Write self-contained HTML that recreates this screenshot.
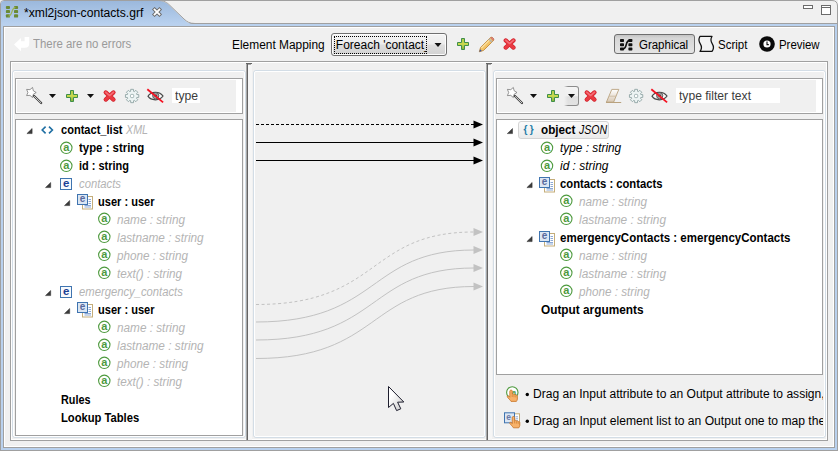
<!DOCTYPE html>
<html><head><meta charset="utf-8"><title>xml2json-contacts.grf</title>
<style>
html,body{margin:0;padding:0;background:#f0f0f0;}
body{width:838px;height:451px;overflow:hidden;position:relative;font-family:"Liberation Sans",sans-serif;}
#root{position:absolute;left:0;top:0;width:838px;height:451px;overflow:hidden;background:#f0f0f0;}
.t{position:absolute;white-space:nowrap;line-height:14px;font-family:"Liberation Sans",sans-serif;transform-origin:0 0;}
.b{position:absolute;box-sizing:border-box;}
.grp{position:absolute;box-sizing:border-box;border:1px solid #d3dde6;border-radius:3px;}
.grp:after{content:"";position:absolute;left:0;top:0;right:0;bottom:0;border:1px solid #fff;border-radius:2px;}
.bx{position:absolute;box-sizing:border-box;border:1px solid #a0a0a0;background:#fff;}
svg{position:absolute;left:0;top:0;overflow:visible;}
.sb{font-family:"Liberation Sans",sans-serif;font-weight:bold;}
</style></head><body><div id="root">

<div class="b" style="left:0px;top:23px;width:838px;height:428px;background:#b9d1ee;border:1px solid #a0a0a0;"></div>
<div class="b" style="left:3px;top:26px;width:832px;height:422px;background:#f0f0f0;border:1px solid #a0a0a0;"></div>
<div class="b" style="left:4px;top:27px;width:830px;height:420px;border:1px solid #fff;"></div>
<div class="b" style="left:10px;top:61px;width:818px;height:380px;border:1px solid #a0a0a0;"></div>
<div class="b" style="left:11px;top:62px;width:816px;height:378px;border:1px solid #fff;"></div>
<div class="grp" style="left:12px;top:70px;width:234px;height:368px;"></div>
<div class="grp" style="left:253px;top:70px;width:233px;height:368px;"></div>
<div class="grp" style="left:493px;top:70px;width:333px;height:368px;"></div>
<div class="b" style="left:246px;top:63px;width:1px;height:377px;background:#a8a8a8;"></div>
<div class="b" style="left:247px;top:63px;width:1px;height:377px;background:#646464;"></div>
<div class="b" style="left:248px;top:64px;width:4px;height:376px;background:#f6f6f6;"></div>
<div class="b" style="left:246px;top:63px;width:6px;height:1px;background:#646464;"></div>
<div class="b" style="left:248px;top:64px;width:3px;height:1px;background:#a8a8a8;"></div>
<div class="b" style="left:486px;top:63px;width:1px;height:377px;background:#a8a8a8;"></div>
<div class="b" style="left:487px;top:63px;width:1px;height:377px;background:#646464;"></div>
<div class="b" style="left:488px;top:64px;width:4px;height:376px;background:#f6f6f6;"></div>
<div class="b" style="left:486px;top:63px;width:6px;height:1px;background:#646464;"></div>
<div class="b" style="left:488px;top:64px;width:3px;height:1px;background:#a8a8a8;"></div>
<div class="bx" style="left:15px;top:78px;width:228px;height:36px;"></div>
<div class="b" style="left:17px;top:80px;width:219px;height:32px;background:#f0f0f0;"></div>
<div class="b" style="left:172px;top:88px;width:28px;height:15px;background:#fff;"></div>
<div class="bx" style="left:15px;top:119px;width:228px;height:317px;"></div>
<div class="bx" style="left:496px;top:78px;width:327px;height:36px;"></div>
<div class="b" style="left:498px;top:80px;width:318px;height:32px;background:#f0f0f0;"></div>
<div class="b" style="left:676px;top:88px;width:104px;height:15px;background:#fff;"></div>
<div class="bx" style="left:496px;top:119px;width:327px;height:256px;"></div>
<div class="b" style="left:518px;top:121px;width:91px;height:18px;border:1px solid #d4d4d4;border-radius:3px;background:linear-gradient(#fafafa,#ebebeb);"></div>
<div class="b" style="left:331px;top:33px;width:116px;height:23px;border:1px solid #707070;border-radius:3px;background:linear-gradient(#f4f4f4 0%,#ececec 48%,#dedede 52%,#d2d2d2 100%);box-shadow:inset 0 0 0 1px #fcfcfc;"></div>
<div class="b" style="left:334px;top:36px;width:93px;height:18px;border:1px dotted #000;"></div>
<div class="b" style="left:614px;top:34px;width:81px;height:20px;border:1px solid #6e6e6e;border-radius:3px;background:linear-gradient(#c4c4c4 0%,#d6d6d6 18%,#dedede 60%,#e4e4e4 100%);"></div>
<div class="b" style="left:564px;top:86px;width:15px;height:20px;border:1px solid #8c8c8c;border-left:none;border-radius:0 3px 3px 0;background:linear-gradient(#f5f5f5 0%,#efefef 50%,#dfdfdf 54%,#e3e3e3 100%);"></div>
<div class="b" style="left:564px;top:86px;width:4px;height:20px;background:linear-gradient(90deg,#f0f0f0,rgba(240,240,240,0));"></div>
<svg width="838" height="451" viewBox="0 0 838 451">
<defs>
<linearGradient id="tabg" x1="0" y1="0" x2="0" y2="1"><stop offset="0" stop-color="#9bb8dc"/><stop offset="1" stop-color="#bbd3f0"/></linearGradient>
<linearGradient id="plusg" x1="0" y1="0" x2="0" y2="1"><stop offset="0" stop-color="#a9c94a"/><stop offset="0.5" stop-color="#cbdb4f"/><stop offset="1" stop-color="#7fae3c"/></linearGradient>
<radialGradient id="xg" cx="0.5" cy="0.4" r="0.6"><stop offset="0" stop-color="#f47a7a"/><stop offset="1" stop-color="#dc2a32"/></radialGradient>
<linearGradient id="curg" x1="0" y1="0" x2="1" y2="1"><stop offset="0.3" stop-color="#fff"/><stop offset="1" stop-color="#c8c8c8"/></linearGradient>
<linearGradient id="erg" x1="0" y1="0" x2="0" y2="1"><stop offset="0" stop-color="#ffffff"/><stop offset="1" stop-color="#d8c8b4"/></linearGradient>

<g id="wand">
 <path d="M8.2 8.8 L15.6 16" stroke="#3a3a3a" stroke-width="2.2" stroke-linecap="round" fill="none"/>
 <path d="M8.8 9.4 L15.3 15.7" stroke="#fff" stroke-width="0.8" stroke-linecap="round" fill="none"/>
 <path d="M6.94 0.46 L7.73 3.74 L10.60 5.50 L7.73 7.26 L6.94 10.54 L4.37 8.35 L1.01 8.62 L2.30 5.50 L1.01 2.38 L4.37 2.65 Z" fill="#fff" stroke="#6a6a6a" stroke-width="0.7" stroke-linejoin="round"/>
</g>
<g id="dd"><path d="M0 0 L7 0 L3.5 4 Z" fill="#111"/></g>
<g id="plus">
 <path d="M4.5 0.5 L7.5 0.5 L7.5 4.5 L11.5 4.5 L11.5 7.5 L7.5 7.5 L7.5 11.5 L4.5 11.5 L4.5 7.5 L0.5 7.5 L0.5 4.5 L4.5 4.5 Z" fill="url(#plusg)" stroke="#3f8f4a" stroke-width="1" stroke-linejoin="miter"/>
</g>
<g id="redx">
 <path d="M2.5 2.4 L10.3 9.6 M10.3 2.4 L2.5 9.6" stroke="#cf222c" stroke-width="4.2" stroke-linecap="round" fill="none"/>
 <path d="M2.5 2.4 L10.3 9.6 M10.3 2.4 L2.5 9.6" stroke="#ea3a42" stroke-width="3" stroke-linecap="round" fill="none"/>
 <path d="M2.6 2.3 L6.4 5.6 L10.2 2.3" stroke="#f47078" stroke-width="1.4" stroke-linecap="round" stroke-linejoin="round" fill="none"/>
</g>
<g id="gear">
 <path d="M5.52 2.33 L5.62 0.34 L8.38 0.34 L8.48 2.33 L9.26 2.65 L10.73 1.32 L12.68 3.27 L11.35 4.74 L11.67 5.52 L13.66 5.62 L13.66 8.38 L11.67 8.48 L11.35 9.26 L12.68 10.73 L10.73 12.68 L9.26 11.35 L8.48 11.67 L8.38 13.66 L5.62 13.66 L5.52 11.67 L4.74 11.35 L3.27 12.68 L1.32 10.73 L2.65 9.26 L2.33 8.48 L0.34 8.38 L0.34 5.62 L2.33 5.52 L2.65 4.74 L1.32 3.27 L3.27 1.32 L4.74 2.65 Z" fill="#edf4f4" stroke="#8fa4a4" stroke-width="0.9" stroke-linejoin="round"/>
 <rect x="5.4" y="5.4" width="3.2" height="3.2" rx="1" fill="#fff" stroke="#93a8a8" stroke-width="0.9"/>
</g>
<g id="eye">
 <path d="M0.7 7.4 C3.4 2.4 12.2 2 15.7 7.2 C12.4 12.2 3.8 12.2 0.7 7.4 Z" fill="#fafafa" stroke="#484848" stroke-width="1.25"/>
 <circle cx="8.4" cy="6.9" r="3.1" fill="#a8a8a8" stroke="#555" stroke-width="0.9"/>
 <circle cx="8.4" cy="6.9" r="1.3" fill="#383838"/>
 <path d="M0 0.4 L15.8 13.6" stroke="#f41222" stroke-width="1.8" fill="none"/>
</g>
<g id="exp"><path d="M0.3 5.4 L5.5 5.4 L5.5 0.3 Z" fill="#3c3c3c" stroke="#2a2a2a" stroke-width="0.5" stroke-linejoin="round"/></g>
<g id="aico">
 <circle cx="6.2" cy="6.2" r="5.7" fill="#fff" stroke="#4e9a3e" stroke-width="1.1"/>
 <text x="6.3" y="9.4" text-anchor="middle" class="sb" font-size="11" fill="#4e9a3e">a</text>
</g>
<g id="eico">
 <rect x="0.5" y="0.5" width="11" height="11" fill="#f7fafd" stroke="#3f74b0" stroke-width="1"/>
 <text x="6.2" y="9.4" text-anchor="middle" class="sb" font-size="11.5" fill="#1c3f94">e</text>
</g>
<g id="elist">
 <rect x="5.5" y="2.5" width="10" height="12.5" fill="#fff" stroke="#c4ad7a" stroke-width="1"/>
 <path d="M11.5 5.5 H14 M11.5 7.5 H14 M11.5 9.5 H14 M7.5 11.5 H14 M7.5 13 H14" stroke="#7f9fd0" stroke-width="0.9"/>
 <rect x="0.5" y="0.5" width="10" height="10" fill="#dbe6f3" stroke="#3f74b0" stroke-width="1"/>
 <text x="5.5" y="8.4" text-anchor="middle" class="sb" font-size="10" fill="#586a9e">e</text>
</g>
<g id="hand">
 <path d="M3.6 0.6 C4.6 0.2 5.2 0.8 5.2 1.6 L5.2 4.6 C5.8 4 6.8 4.2 7 5 C7.6 4.6 8.6 4.8 8.8 5.6 C9.4 5.2 10.4 5.6 10.4 6.6 L10.4 9.4 C10.4 10.6 9.6 11.2 9.4 11.8 L4 11.8 C3.4 10.6 1.2 8.6 0.4 7.4 C0 6.6 1 5.8 1.8 6.6 L2.8 7.6 L2.8 1.6 C2.8 1 3.1 0.8 3.6 0.6 Z" fill="#f7b26a" stroke="#c67224" stroke-width="0.8" stroke-linejoin="round"/>
 <path d="M5.2 5 V7.4 M7 5.4 V7.6 M8.8 6 V7.8" stroke="#c67224" stroke-width="0.6"/>
</g>
</defs>
<path d="M0.5 24 L0.5 4 Q0.5 0.5 4 0.5 L832 0.5 Q837.5 0.5 837.5 6 L837.5 24" fill="none" stroke="#a0a0a0"/>
<path d="M1 26 L1 4 Q1 1 4 1 L158 1 C164 1 167 3 170 6 L184 19.5 C187 22.3 189.5 24 195 24 L837 24 L837 26 Z" fill="url(#tabg)"/>
<path d="M158 0.5 C164 0.5 167 2.5 170 5.5 L184 19 C187 21.8 189.5 23.5 195 23.5 L837 23.5" fill="none" stroke="#a0a0a0"/>
<rect x="1" y="24" width="836" height="2" fill="#b9d1ee"/>
<rect x="5.9" y="6" width="4.1" height="3" rx="0.9" fill="#6b8a34"/>
<rect x="5.9" y="10.1" width="4.1" height="3" rx="0.9" fill="#6b8a34"/>
<rect x="5.9" y="14.3" width="4.1" height="3.3" rx="0.9" fill="#6b8a34"/>
<rect x="14" y="6" width="4.1" height="3" rx="0.9" fill="#6b8a34"/>
<rect x="14" y="10.1" width="4.1" height="3" rx="0.9" fill="#6b8a34"/>
<rect x="14" y="14.3" width="4.1" height="3.3" rx="0.9" fill="#6b8a34"/>
<path d="M8.5 16.2 C12.4 16.2 11.4 7.4 15.4 7.4" fill="none" stroke="#9db356" stroke-width="1.3"/>
<path d="M154.6 9.6 L159.4 14.4 M159.4 9.6 L154.6 14.4" stroke="#6a6a6a" stroke-width="3.7" stroke-linecap="square" fill="none"/>
<path d="M154.6 9.6 L159.4 14.4 M159.4 9.6 L154.6 14.4" stroke="#fff" stroke-width="1.9" stroke-linecap="square" fill="none"/>
<rect x="803.5" y="5.5" width="9" height="3" fill="#fff" stroke="#6b6b6b"/>
<rect x="821.5" y="5.5" width="9" height="9" fill="#fff" stroke="#6b6b6b"/>
<path d="M821 7.5 H831" stroke="#6b6b6b" stroke-width="1"/>
<path d="M14 44.5 L21 38 L21 41.2 L24.6 41.2 L24.6 37 L29.2 37 L29.2 43.5 Q29.2 47.8 25 47.8 L21 47.8 L21 51.2 Z" fill="#fff"/>
<use href="#dd" x="434.5" y="43"/>
<use href="#plus" x="457" y="38"/>
<g transform="translate(479,37)"><path d="M0.3 14.8 L1.6 10.4 L11.2 0.8 C12 0 13.2 0.2 14 1 C14.8 1.8 15 3 14.2 3.8 L4.6 13.4 Z" fill="#f3c367" stroke="#c28a3c" stroke-width="0.9" stroke-linejoin="round"/><path d="M2.4 11 L11.6 1.8" stroke="#fbe3a8" stroke-width="1.1" fill="none"/><path d="M10 2 L13 5" stroke="#b4b4b4" stroke-width="1.6"/><path d="M11.6 0.8 C12.4 0.2 13.4 0.3 14 1 C14.7 1.7 14.8 2.7 14.2 3.5 Z" fill="#e58a84" stroke="#c0605c" stroke-width="0.6"/><path d="M0.3 14.8 L1.1 12.2 L2.9 14 Z" fill="#3b57a8"/></g>
<use href="#redx" x="503.2" y="38"/>
<rect x="620" y="39" width="4" height="2.9" rx="0.7" fill="#111"/>
<rect x="620" y="43.3" width="4" height="2.9" rx="0.7" fill="#111"/>
<rect x="620" y="47.4" width="4" height="3.1" rx="0.7" fill="#111"/>
<rect x="628.4" y="39" width="4" height="2.9" rx="0.7" fill="#111"/>
<rect x="628.4" y="43.3" width="4" height="2.9" rx="0.7" fill="#111"/>
<rect x="628.4" y="47.4" width="4" height="3.1" rx="0.7" fill="#111"/>
<path d="M622.5 49 C628.2 49 624.3 40.4 630 40.4" fill="none" stroke="#111" stroke-width="1.6"/>
<path d="M700 36.4 H712 C710 39.5 711 41.8 712.3 43.8 C713.6 45.8 714.2 48.3 712 51.4 H700 C702.2 48.3 701.6 45.8 700.3 43.8 C699 41.8 698 39.5 700 36.4 Z" fill="#f3f3f3" stroke="#111" stroke-width="1.25" stroke-linejoin="round"/>
<circle cx="767" cy="44" r="7.8" fill="#0a0a0a"/>
<circle cx="767" cy="44" r="3.6" fill="#fff"/>
<path d="M767 41.6 V44.6 H768.8" stroke="#0a0a0a" stroke-width="1.1" fill="none"/>
<use href="#wand" x="25.6" y="87"/>
<use href="#dd" x="49" y="94"/>
<use href="#plus" x="66" y="90"/>
<use href="#dd" x="87" y="94"/>
<use href="#redx" x="103.2" y="90"/>
<use href="#gear" x="125.1" y="89"/>
<use href="#eye" x="147.3" y="88.8"/>
<use href="#wand" x="506.4" y="87"/>
<use href="#dd" x="530" y="94"/>
<use href="#plus" x="547" y="90"/>
<use href="#dd" x="568" y="94"/>
<use href="#redx" x="584.2" y="90"/>
<g><path d="M611.8 89.4 L618.8 89.4 L613.6 102.2 L606.4 102.2 Z" fill="url(#erg)" stroke="#b9a27e" stroke-width="0.9" stroke-linejoin="round"/><path d="M609.2 96.2 L616 96.2" stroke="#c9b79a" stroke-width="0.8"/><path d="M606 102.5 L621.2 102.5" stroke="#b9a27e" stroke-width="1"/></g>
<use href="#gear" x="629.1" y="89"/>
<use href="#eye" x="651.3" y="88.8"/>
<path d="M256 124.5 H474" stroke="#000" stroke-width="1" stroke-dasharray="3 2" fill="none"/>
<path d="M473.5 120.5 L483.0 124.5 L473.5 128.5 Z" fill="#000"/>
<path d="M256 142.5 H474" stroke="#000" stroke-width="1" fill="none"/>
<path d="M473.5 138.5 L483.0 142.5 L473.5 146.5 Z" fill="#000"/>
<path d="M256 160.5 H474" stroke="#000" stroke-width="1" fill="none"/>
<path d="M473.5 156.5 L483.0 160.5 L473.5 164.5 Z" fill="#000"/>
<path d="M256 304.5 C381 304.5 367 232 474 232" stroke="#c2c2c2" stroke-width="1" fill="none" stroke-dasharray="3 2.5"/>
<path d="M473.5 228 L483.0 232 L473.5 236 Z" fill="#c2c2c2"/>
<path d="M256 322 C381 322 367 250 474 250" stroke="#c2c2c2" stroke-width="1" fill="none"/>
<path d="M473.5 246 L483.0 250 L473.5 254 Z" fill="#c2c2c2"/>
<path d="M256 340 C381 340 367 268 474 268" stroke="#c2c2c2" stroke-width="1" fill="none"/>
<path d="M473.5 264 L483.0 268 L473.5 272 Z" fill="#c2c2c2"/>
<path d="M256 358.5 C381 358.5 367 286.5 474 286.5" stroke="#c2c2c2" stroke-width="1" fill="none"/>
<path d="M473.5 282.5 L483.0 286.5 L473.5 290.5 Z" fill="#c2c2c2"/>
<use href="#exp" x="26.6" y="128.2"/>
<path d="M45.6 126.6 L42.2 130 L45.6 133.4 M49 126.6 L52.4 130 L49 133.4" fill="none" stroke="#1f6fa3" stroke-width="1.6" stroke-linejoin="miter"/>
<use href="#aico" x="60.1" y="141.6"/>
<use href="#aico" x="60.1" y="159.6"/>
<use href="#exp" x="45.2" y="182.2"/>
<use href="#eico" x="60" y="178"/>
<use href="#exp" x="64.2" y="200.2"/>
<use href="#elist" x="77" y="194"/>
<use href="#aico" x="98.1" y="212.6"/>
<use href="#aico" x="98.1" y="230.6"/>
<use href="#aico" x="98.1" y="248.6"/>
<use href="#aico" x="98.1" y="266.6"/>
<use href="#exp" x="45.2" y="290.2"/>
<use href="#eico" x="60" y="286"/>
<use href="#exp" x="64.2" y="308.2"/>
<use href="#elist" x="77" y="302"/>
<use href="#aico" x="98.1" y="320.6"/>
<use href="#aico" x="98.1" y="338.6"/>
<use href="#aico" x="98.1" y="356.6"/>
<use href="#aico" x="98.1" y="374.6"/>
<use href="#exp" x="507" y="128.2"/>
<text x="523.4" y="132.6" class="sb" font-size="10" fill="#1f7da8">{</text><text x="529.8" y="132.6" class="sb" font-size="10" fill="#1f7da8">}</text>
<use href="#aico" x="540.8" y="141.6"/>
<use href="#aico" x="540.8" y="159.6"/>
<use href="#exp" x="526.6" y="182.2"/>
<use href="#elist" x="539" y="177"/>
<use href="#aico" x="560.1" y="194.6"/>
<use href="#aico" x="560.1" y="212.6"/>
<use href="#exp" x="526.6" y="236.2"/>
<use href="#elist" x="539" y="231"/>
<use href="#aico" x="560.1" y="248.6"/>
<use href="#aico" x="560.1" y="266.6"/>
<use href="#aico" x="560.1" y="284.6"/>
<circle cx="512.3" cy="392.4" r="5.7" fill="#fff" stroke="#4e9a3e" stroke-width="1.1"/>
<text x="514" y="395" text-anchor="middle" class="sb" font-size="8" fill="#4e9a3e">a</text>
<use href="#hand" x="507" y="389.6"/>
<g transform="translate(504,412.3)"><rect x="9.5" y="1.5" width="6" height="11" fill="#fff" stroke="#c4ad7a"/><path d="M11.5 4.5 H14 M11.5 6.5 H14 M11.5 8.5 H14" stroke="#7f9fd0" stroke-width="0.9"/><rect x="0.5" y="0.5" width="10" height="10" fill="#dbe6f3" stroke="#3f74b0"/><text x="4.6" y="8" text-anchor="middle" class="sb" font-size="8.5" fill="#6a7aa8">e</text></g>
<use href="#hand" x="509.4" y="416"/>
<circle cx="527.3" cy="394.5" r="1.7" fill="#000"/>
<circle cx="527.3" cy="421.2" r="1.7" fill="#000"/>
<path d="M388.5 386.5 L388.5 407.5 L393.4 403.4 L396.6 410.6 L400.8 408.8 L397.6 402.2 L403.8 402 Z" fill="url(#curg)" stroke="#1e1e2e" stroke-width="1" stroke-linejoin="round"/>
</svg>
<div class="t" style="left:24px;top:6px;font-size:12px;color:#000;transform:scaleX(1.0106);">*xml2json-contacts.grf</div>
<div class="t" style="left:33px;top:37px;font-size:12px;color:#9a9a9a;transform:scaleX(0.9508);">There are no errors</div>
<div class="t" style="left:232.3px;top:38px;font-size:12px;color:#000;transform:scaleX(0.9926);">Element Mapping</div>
<div class="b" style="left:335px;top:38px;width:91.5px;height:16px;overflow:hidden;"><div class="t" style="left:0.8px;top:0px;font-size:12px;color:#000;">Foreach 'contact_list'</div></div>
<div class="t" style="left:638.5px;top:38px;font-size:12px;color:#000;transform:scaleX(0.9560);">Graphical</div>
<div class="t" style="left:718.3px;top:38px;font-size:12px;color:#000;transform:scaleX(0.9580);">Script</div>
<div class="t" style="left:779.4px;top:38px;font-size:12px;color:#000;transform:scaleX(0.9511);">Preview</div>
<div class="t" style="left:175.2px;top:89px;font-size:12px;color:#3c3c3c;transform:scaleX(1.0138);">type</div>
<div class="t" style="left:679px;top:89px;font-size:12px;color:#3c3c3c;transform:scaleX(1.0088);">type filter text</div>
<div class="t" style="left:60.5px;top:123px;font-size:12px;color:#000;font-weight:bold;transform:scaleX(0.9222);">contact_list</div>
<div class="t" style="left:125.6px;top:123px;font-size:12px;color:#b4b4b4;font-style:italic;transform:scaleX(0.8911);">XML</div>
<div class="t" style="left:79.2px;top:141px;font-size:12px;color:#000;font-weight:bold;transform:scaleX(0.9509);">type : string</div>
<div class="t" style="left:79.2px;top:159px;font-size:12px;color:#000;font-weight:bold;transform:scaleX(0.9145);">id : string</div>
<div class="t" style="left:79.2px;top:177px;font-size:12px;color:#b4b4b4;font-style:italic;transform:scaleX(0.9395);">contacts</div>
<div class="t" style="left:98px;top:195px;font-size:12px;color:#000;font-weight:bold;transform:scaleX(0.9208);">user : user</div>
<div class="t" style="left:117px;top:213px;font-size:12px;color:#b4b4b4;font-style:italic;transform:scaleX(0.9802);">name : string</div>
<div class="t" style="left:117px;top:321px;font-size:12px;color:#b4b4b4;font-style:italic;transform:scaleX(0.9802);">name : string</div>
<div class="t" style="left:117px;top:231px;font-size:12px;color:#b4b4b4;font-style:italic;transform:scaleX(0.9847);">lastname : string</div>
<div class="t" style="left:117px;top:339px;font-size:12px;color:#b4b4b4;font-style:italic;transform:scaleX(0.9847);">lastname : string</div>
<div class="t" style="left:117px;top:249px;font-size:12px;color:#b4b4b4;font-style:italic;transform:scaleX(0.9764);">phone : string</div>
<div class="t" style="left:117px;top:357px;font-size:12px;color:#b4b4b4;font-style:italic;transform:scaleX(0.9764);">phone : string</div>
<div class="t" style="left:117px;top:267px;font-size:12px;color:#b4b4b4;font-style:italic;transform:scaleX(0.9747);">text() : string</div>
<div class="t" style="left:117px;top:375px;font-size:12px;color:#b4b4b4;font-style:italic;transform:scaleX(0.9747);">text() : string</div>
<div class="t" style="left:79.2px;top:285px;font-size:12px;color:#b4b4b4;font-style:italic;transform:scaleX(0.9374);">emergency_contacts</div>
<div class="t" style="left:98px;top:303px;font-size:12px;color:#000;font-weight:bold;transform:scaleX(0.9208);">user : user</div>
<div class="t" style="left:60.5px;top:393px;font-size:12px;color:#000;font-weight:bold;transform:scaleX(0.9025);">Rules</div>
<div class="t" style="left:60.5px;top:411px;font-size:12px;color:#000;font-weight:bold;transform:scaleX(0.9332);">Lookup Tables</div>
<div class="t" style="left:541px;top:123px;font-size:12px;color:#000;font-weight:bold;transform:scaleX(0.9733);">object</div>
<div class="t" style="left:578.6px;top:123px;font-size:12px;color:#000;font-style:italic;transform:scaleX(0.8777);">JSON</div>
<div class="t" style="left:559.5px;top:141px;font-size:12px;color:#000;font-style:italic;transform:scaleX(0.9866);">type : string</div>
<div class="t" style="left:559.5px;top:159px;font-size:12px;color:#000;font-style:italic;transform:scaleX(0.9961);">id : string</div>
<div class="t" style="left:560px;top:177px;font-size:12px;color:#000;font-weight:bold;transform:scaleX(0.9373);">contacts : contacts</div>
<div class="t" style="left:578.7px;top:195px;font-size:12px;color:#b4b4b4;font-style:italic;transform:scaleX(0.9802);">name : string</div>
<div class="t" style="left:578.7px;top:213px;font-size:12px;color:#b4b4b4;font-style:italic;transform:scaleX(0.9881);">lastname : string</div>
<div class="t" style="left:560px;top:231px;font-size:12px;color:#000;font-weight:bold;transform:scaleX(0.9600);">emergencyContacts : emergencyContacts</div>
<div class="t" style="left:578.7px;top:249px;font-size:12px;color:#b4b4b4;font-style:italic;transform:scaleX(0.9802);">name : string</div>
<div class="t" style="left:578.7px;top:267px;font-size:12px;color:#b4b4b4;font-style:italic;transform:scaleX(0.9881);">lastname : string</div>
<div class="t" style="left:578.7px;top:285px;font-size:12px;color:#b4b4b4;font-style:italic;transform:scaleX(0.9736);">phone : string</div>
<div class="t" style="left:541.2px;top:303px;font-size:12px;color:#000;font-weight:bold;transform:scaleX(0.9856);">Output arguments</div>
<div class="b" style="left:531px;top:384px;width:292px;height:50px;overflow:hidden;"><div class="t" style="left:2.2px;top:3px;font-size:12px;color:#000;transform:scaleX(1.0049);">Drag an Input attribute to an Output attribute to assign,</div><div class="t" style="left:2.2px;top:30px;font-size:12px;color:#000;transform:scaleX(1.0093);">Drag an Input element list to an Output one to map the</div></div>
</div></body></html>
